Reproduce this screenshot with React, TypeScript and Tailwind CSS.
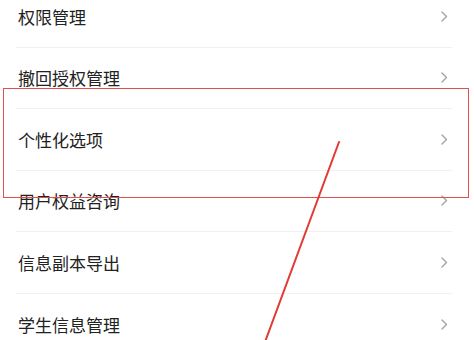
import React from "react";

/** Settings rows shown in the list */
const items = ["权限管理", "撤回授权管理", "个性化选项", "用户权益咨询", "信息副本导出", "学生信息管理"];

function Chevron() {
	return (
		<svg width="7" height="11" viewBox="0 0 7 11" fill="none" className="shrink-0">
			<polyline points="1,1 5.5,5.5 1,10" stroke="#a3a3a3" strokeWidth="1.4" strokeLinecap="round" strokeLinejoin="round" />
		</svg>
	);
}

export default function App() {
	return (
		<div
			className="relative h-[340px] w-[474px] overflow-hidden bg-white"
			style={{ fontFamily: '"Noto Sans CJK SC", "Noto Sans", sans-serif' }}
		>
			<div className="-mt-[14px] flex flex-col">
				{items.map((label, i) => (
					<div key={label} className="ml-[16px] mr-[22px] flex h-[61.5px] flex-col">
						<div className="flex flex-1 items-center justify-between pl-[2px] pr-[4px]">
							<span className="text-[17px] leading-none text-[#222]">{label}</span>
							<Chevron />
						</div>
						{i < items.length - 1 && <div className="h-px bg-[#f1f1f1]" />}
					</div>
				))}
			</div>

			{/* highlight box */}
			<div className="pointer-events-none absolute left-[3px] top-[88px] h-[110px] w-[466px] border-[1.5px] border-[#e0514d]" />

			{/* arrow */}
			<svg className="pointer-events-none absolute left-0 top-0" width="474" height="340" viewBox="0 0 474 340">
				<line x1="265" y1="342" x2="339" y2="142" stroke="#e23a35" strokeWidth="2" strokeLinecap="round" />
			</svg>
		</div>
	);
}
